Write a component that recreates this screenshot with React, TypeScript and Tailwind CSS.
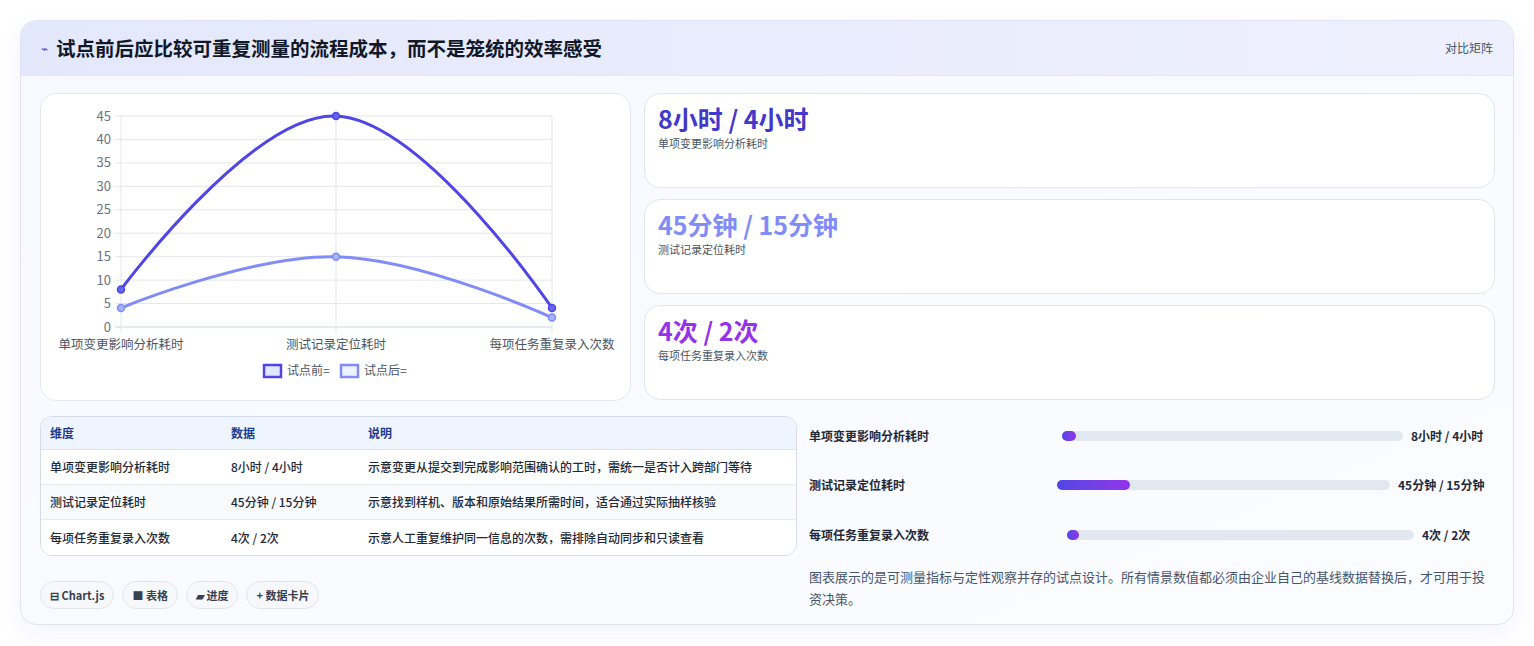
import React from "react";

const font = { fontFamily: '"Noto Sans CJK SC", "Noto Sans", sans-serif' };

function Chart() {
  const top = 22, bottom = 233, left = 80, right = 511;
  const ticks = [0, 5, 10, 15, 20, 25, 30, 35, 40, 45];
  const y = (v: number) => bottom - (v / 45) * (bottom - top);
  return (
    <svg width="590" height="305" viewBox="0 0 590 305" style={font}>
      {ticks.map((t) => (
        <g key={t}>
          <line x1={left - 6} x2={right} y1={y(t)} y2={y(t)} stroke={t === 0 ? "#cbd5e1" : "#e5e7eb"} />
          <text x={left - 10} y={y(t) + 4.5} textAnchor="end" fontSize="13" fill="#6b7280">{t}</text>
        </g>
      ))}
      {[left, 295, right].map((x) => (
        <line key={x} x1={x} x2={x} y1={top} y2={bottom + 6} stroke="#e5e7eb" />
      ))}
      <path d="M80,195.5 C80,195.5 211,18.4 295,22 C383,25.8 511,214 511,214" fill="none" stroke="#4f46e5" strokeWidth="3" />
      <path d="M80,214 C80,214 209,160.8 295,162.7 C382,164.6 511,223.6 511,223.6" fill="none" stroke="#818cf8" strokeWidth="3" />
      {[[80, 195.5], [295, 22], [511, 214]].map(([cx, cy], i) => (
        <circle key={i} cx={cx} cy={cy} r="3.5" fill="#6366f1" stroke="#4f46e5" strokeWidth="1.5" />
      ))}
      {[[80, 214], [295, 162.7], [511, 223.6]].map(([cx, cy], i) => (
        <circle key={i} cx={cx} cy={cy} r="3.5" fill="#a5b4fc" stroke="#818cf8" strokeWidth="1.5" />
      ))}
      <text x={80} y={255} textAnchor="middle" fontSize="12.5" fill="#4b5563">单项变更影响分析耗时</text>
      <text x={295} y={255} textAnchor="middle" fontSize="12.5" fill="#4b5563">测试记录定位耗时</text>
      <text x={511} y={255} textAnchor="middle" fontSize="12.5" fill="#4b5563">每项任务重复录入次数</text>
      <rect x={223} y={271} width={17} height={12} fill="#e0e7ff" stroke="#4f46e5" strokeWidth="2.5" />
      <text x={246} y={281} fontSize="12" fill="#4b5563">试点前=</text>
      <rect x={300} y={271} width={17} height={12} fill="#eef2ff" stroke="#818cf8" strokeWidth="2.5" />
      <text x={323} y={281} fontSize="12" fill="#4b5563">试点后=</text>
    </svg>
  );
}

const stats = [
  { v: "8小时 / 4小时", l: "单项变更影响分析耗时", c: "text-[#4338ca]" },
  { v: "45分钟 / 15分钟", l: "测试记录定位耗时", c: "text-[#818cf8]" },
  { v: "4次 / 2次", l: "每项任务重复录入次数", c: "text-[#9333ea]" },
];

const rows = [
  ["单项变更影响分析耗时", "8小时 / 4小时", "示意变更从提交到完成影响范围确认的工时，需统一是否计入跨部门等待"],
  ["测试记录定位耗时", "45分钟 / 15分钟", "示意找到样机、版本和原始结果所需时间，适合通过实际抽样核验"],
  ["每项任务重复录入次数", "4次 / 2次", "示意人工重复维护同一信息的次数，需排除自动同步和只读查看"],
];

const bars = [
  { l: "单项变更影响分析耗时", v: "8小时 / 4小时", w: "4%", pad: "pl-[133px]", pr: "w-[84px]" },
  { l: "测试记录定位耗时", v: "45分钟 / 15分钟", w: "22%", pad: "pl-[128px]", pr: "w-[97px]" },
  { l: "每项任务重复录入次数", v: "4次 / 2次", w: "3.5%", pad: "pl-[138px]", pr: "w-[73px]" },
];

export default function App() {
  return (
    <div className="min-h-[646px] bg-white p-5 pb-0" style={font}>
      <div className="rounded-2xl border border-[#dfe3f5] bg-gradient-to-br from-[#f8f9ff] to-[#fbfcff] shadow-[0_8px_24px_rgba(99,102,241,0.08)] overflow-hidden h-[605px]">
        <div className="flex items-center justify-between h-[55px] px-5 bg-gradient-to-r from-[#e4e8fc] to-[#eef0fd] border-b border-[#e5e8f8]">
          <div className="flex items-center gap-2">
            <span className="text-[#4f46e5] text-xs">⌁</span>
            <span className="text-[19.5px] font-bold text-[#111827]">试点前后应比较可重复测量的流程成本，而不是笼统的效率感受</span>
          </div>
          <span className="text-xs text-[#4b5563]">对比矩阵</span>
        </div>
        <div className="pl-[19px] pr-5 pt-[17px]">
          <div className="flex gap-[13px]">
            <div className="w-[591px] h-[308px] rounded-2xl border border-[#e5e8f3] bg-white shrink-0">
              <Chart />
            </div>
            <div className="flex-1 flex flex-col gap-[11px] mr-[-2px]">
              {stats.map((s) => (
                <div key={s.l} className="h-[95px] rounded-2xl border border-[#e0e5f3] bg-white px-[13px] pt-[8px]">
                  <div className={`text-[25px] font-bold leading-[32px] ${s.c}`}>{s.v}</div>
                  <div className="text-[11px] text-[#4b5563] mt-[1px]">{s.l}</div>
                </div>
              ))}
            </div>
          </div>
          <div className="flex gap-[12px] mt-[15px]">
            <div className="w-[757px] shrink-0">
              <div className="rounded-xl border border-[#d5dbe8] overflow-hidden bg-white">
                <div className="flex h-[33px] items-center bg-[#eef5ff] text-xs font-bold text-[#1e3a8a] border-b border-[#dbe3ef]">
                  <div className="w-[190px] pl-[9px]">维度</div>
                  <div className="w-[137px]">数据</div>
                  <div>说明</div>
                </div>
                {rows.map((r, i) => (
                  <div key={i} className={`flex h-[35px] items-center text-xs font-medium text-[#1f2937] ${i < 2 ? "border-b border-[#e5e9f0]" : ""} ${i === 1 ? "bg-[#f8fafc]" : "bg-white"}`}>
                    <div className="w-[190px] pl-[9px]">{r[0]}</div>
                    <div className="w-[137px]">{r[1]}</div>
                    <div>{r[2]}</div>
                  </div>
                ))}
              </div>
              <div className="flex gap-2 mt-[25px]">
                {["⊟ Chart.js", "■ 表格", "▰ 进度", "+ 数据卡片"].map((t) => (
                  <span key={t} className="h-[28px] px-[9px] flex items-center rounded-full border border-[#e2e5ee] bg-[#f7f8fb] text-[11px] font-bold text-[#374151]">{t}</span>
                ))}
              </div>
            </div>
            <div className="flex-1 mr-[-2px] -mt-[5px]">
              {bars.map((b) => (
                <div key={b.l} className="flex items-center h-[49.5px] text-xs font-bold text-[#1f2937]">
                  <div className="w-[120px] shrink-0">{b.l}</div>
                  <div className={`flex-1 ${b.pad} pr-[8px]`}>
                    <div className="h-[10px] rounded-full bg-[#e2e8f0]">
                      <div className="h-[10px] rounded-full bg-gradient-to-r from-[#4f46e5] to-[#9333ea] min-w-[12px]" style={{ width: b.w }} />
                    </div>
                  </div>
                  <div className={`${b.pr} shrink-0 text-left`}>{b.v}</div>
                </div>
              ))}
              <p className="text-[13px] leading-[22px] text-[#475569] mt-[6px]">图表展示的是可测量指标与定性观察并存的试点设计。所有情景数值都必须由企业自己的基线数据替换后，才可用于投资决策。</p>
            </div>
          </div>
        </div>
      </div>
    </div>
  );
}
